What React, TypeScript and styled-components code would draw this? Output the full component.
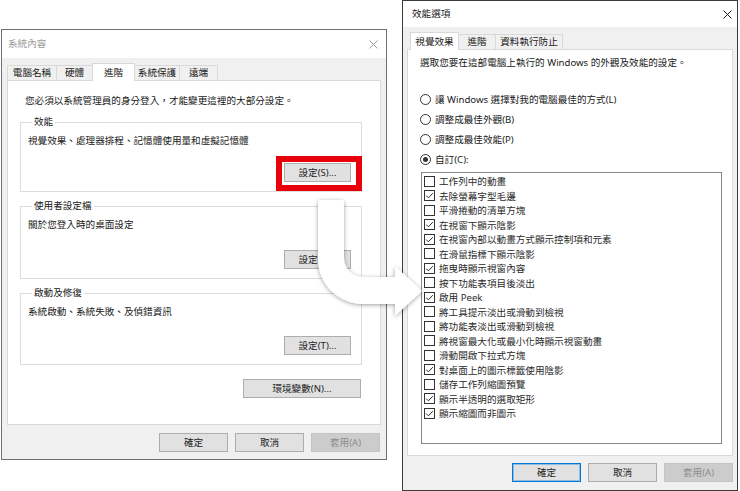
import styled, { createGlobalStyle } from 'styled-components';

type Item = { label: string; checked: boolean };

const modes: Item[] = [
  { label: '讓 Windows 選擇對我的電腦最佳的方式(L)', checked: false },
  { label: '調整成最佳外觀(B)', checked: false },
  { label: '調整成最佳效能(P)', checked: false },
  { label: '自訂(C):', checked: true },
];

const effects: Item[] = [
  { label: '工作列中的動畫', checked: false },
  { label: '去除螢幕字型毛邊', checked: true },
  { label: '平滑捲動的清單方塊', checked: false },
  { label: '在視窗下顯示陰影', checked: true },
  { label: '在視窗內部以動畫方式顯示控制項和元素', checked: true },
  { label: '在滑鼠指標下顯示陰影', checked: false },
  { label: '拖曳時顯示視窗內容', checked: true },
  { label: '按下功能表項目後淡出', checked: false },
  { label: '啟用 Peek', checked: true },
  { label: '將工具提示淡出或滑動到檢視', checked: false },
  { label: '將功能表淡出或滑動到檢視', checked: false },
  { label: '將視窗最大化或最小化時顯示視窗動畫', checked: false },
  { label: '滑動開啟下拉式方塊', checked: false },
  { label: '對桌面上的圖示標籤使用陰影', checked: true },
  { label: '儲存工作列縮圖預覽', checked: false },
  { label: '顯示半透明的選取矩形', checked: true },
  { label: '顯示縮圖而非圖示', checked: true },
];

function CloseIcon() {
  return (
    <svg width="9" height="9" viewBox="0 0 9 9">
      <path d="M0.5 0.5 L8.5 8.5 M8.5 0.5 L0.5 8.5" stroke="currentColor" strokeWidth="1" />
    </svg>
  );
}

export default function App() {
  return (
    <>
      <GlobalStyle />
      <Stage>
        <Window $w={386} $h={431} $mt={29} $ml={1} $border="#707070">
          <TitleBar $h={28} $active={false} $pl={6} $pr={8}>
            <span>系統內容</span>
            <CloseIcon />
          </TitleBar>
          <Body $pad="5px 5px 0 5px">
            <TabStrip $ml={0}>
              <Tab $w={50}>電腦名稱</Tab>
              <Tab $w={37}>硬體</Tab>
              <Tab $w={43} $active>進階</Tab>
              <Tab $w={46}>系統保護</Tab>
              <Tab $w={39}>遠端</Tab>
            </TabStrip>
            <Panel $h={345} $pad="13px 18px 0 12px">
              <Note>您必須以系統管理員的身分登入，才能變更這裡的大部分設定。</Note>
              <Group $mt={8}>
                <GroupLabel>效能</GroupLabel>
                <Desc>視覺效果、處理器排程、記憶體使用量和虛擬記憶體</Desc>
                <ButtonLine $mt={15}>
                  <Highlight>
                    <Button $w={67}>設定(S)...</Button>
                  </Highlight>
                </ButtonLine>
              </Group>
              <Group $mt={8}>
                <GroupLabel>使用者設定檔</GroupLabel>
                <Desc>關於您登入時的桌面設定</Desc>
                <ButtonLine $mt={18}>
                  <Button $w={67}>設定(E)...</Button>
                </ButtonLine>
              </Group>
              <Group $mt={8}>
                <GroupLabel>啟動及修復</GroupLabel>
                <Desc>系統啟動、系統失敗、及偵錯資訊</Desc>
                <ButtonLine $mt={17}>
                  <Button $w={67}>設定(T)...</Button>
                </ButtonLine>
              </Group>
              <ButtonLine $mt={14} $pr={1}>
                <Button $w={118}>環境變數(N)...</Button>
              </ButtonLine>
            </Panel>
            <DialogButtons $mt={8} $pr={1}>
              <Button $w={69}>確定</Button>
              <Button $w={69}>取消</Button>
              <Button $w={69} disabled>
                套用(A)
              </Button>
            </DialogButtons>
          </Body>
        </Window>

        <Window $w={336} $h={491} $mt={0} $ml={15} $border="#3c3c3c">
          <TitleBar $h={26} $active $pl={9} $pr={5}>
            <span>效能選項</span>
            <CloseIcon />
          </TitleBar>
          <Body $pad="5px 4px 0 4px">
            <TabStrip $ml={3}>
              <Tab $w={49} $active>視覺效果</Tab>
              <Tab $w={38}>進階</Tab>
              <Tab $w={68}>資料執行防止</Tab>
            </TabStrip>
            <Panel $h={407} $pad="6px 10px 0 12px">
              <Note $ml={0}>選取您要在這部電腦上執行的 Windows 的外觀及效能的設定。</Note>
              <RadioList>
                {modes.map((m) => (
                  <RadioRow key={m.label}>
                    <Radio $on={m.checked} />
                    {m.label}
                  </RadioRow>
                ))}
              </RadioList>
              <ListBox>
                {effects.map((e) => (
                  <CheckRow key={e.label}>
                    <CheckBox>
                      {e.checked && (
                        <svg width="9" height="9" viewBox="0 0 9 9">
                          <polyline
                            points="1.2,4.6 3.4,6.8 7.8,2.2"
                            fill="none"
                            stroke="#2b2b2b"
                            strokeWidth="1"
                          />
                        </svg>
                      )}
                    </CheckBox>
                    {e.label}
                  </CheckRow>
                ))}
              </ListBox>
            </Panel>
            <DialogButtons $mt={7} $pr={0}>
              <Button $w={69} $default>確定</Button>
              <Button $w={69}>取消</Button>
              <Button $w={69} disabled>
                套用(A)
              </Button>
            </DialogButtons>
          </Body>
        </Window>

        <ArrowLayer viewBox="0 0 740 491" aria-hidden="true">
          <defs>
            <filter id="arrow-shadow" x="-30%" y="-30%" width="160%" height="160%">
              <feDropShadow dx="0" dy="1" stdDeviation="2" floodColor="#000" floodOpacity="0.38" />
            </filter>
          </defs>
          <path
            d="M321 200 H341 Q344 200 344 203 V258 A19 19 0 0 0 363 277 H395 V266 L422 291 L395 316 V304 H363 A45 45 0 0 1 318 259 V203 Q318 200 321 200 Z"
            fill="#fff"
            filter="url(#arrow-shadow)"
          />
        </ArrowLayer>
      </Stage>
    </>
  );
}

const GlobalStyle = createGlobalStyle`
  html, body {
    margin: 0;
    padding: 0;
    background: #fff;
  }
  body {
    font-family: "Noto Sans", "Noto Sans CJK TC", sans-serif;
    font-size: 9.6px;
    color: #202020;
  }
  *, *::before, *::after {
    box-sizing: border-box;
  }
`;

const Stage = styled.div`
  position: relative;
  width: 740px;
  height: 491px;
  display: flex;
  align-items: flex-start;
  overflow: hidden;
`;

const Window = styled.section<{ $w: number; $h: number; $mt: number; $ml: number; $border: string }>`
  flex: none;
  width: ${(p) => p.$w}px;
  height: ${(p) => p.$h}px;
  margin: ${(p) => p.$mt}px 0 0 ${(p) => p.$ml}px;
  border: 1px solid ${(p) => p.$border};
  background: #f0f0f0;
  display: flex;
  flex-direction: column;
`;

const TitleBar = styled.header<{ $h: number; $active: boolean; $pl: number; $pr: number }>`
  flex: none;
  height: ${(p) => p.$h}px;
  background: #fff;
  display: flex;
  align-items: center;
  justify-content: space-between;
  padding: 0 ${(p) => p.$pr}px 0 ${(p) => p.$pl}px;
  color: ${(p) => (p.$active ? '#1a1a1a' : '#9a9a9a')};
  line-height: 14px;
`;

const Body = styled.div<{ $pad: string }>`
  flex: 1;
  display: flex;
  flex-direction: column;
  padding: ${(p) => p.$pad};
`;

const TabStrip = styled.div<{ $ml: number }>`
  position: relative;
  z-index: 1;
  flex: none;
  height: 17px;
  display: flex;
  align-items: flex-end;
  margin-left: ${(p) => p.$ml}px;
`;

const Tab = styled.div<{ $w: number; $active?: boolean }>`
  position: relative;
  z-index: ${(p) => (p.$active ? 2 : 1)};
  width: ${(p) => p.$w}px;
  height: ${(p) => (p.$active ? 18 : 15)}px;
  margin-bottom: ${(p) => (p.$active ? -1 : 0)}px;
  margin-right: -1px;
  display: flex;
  align-items: center;
  justify-content: center;
  border: 1px solid #d9d9d9;
  border-bottom: none;
  background: ${(p) => (p.$active ? '#fff' : '#f0f0f0')};
  line-height: 12px;
  white-space: nowrap;
`;

const Panel = styled.div<{ $h: number; $pad: string }>`
  flex: none;
  height: ${(p) => p.$h}px;
  background: #fff;
  border: 1px solid #d9d9d9;
  padding: ${(p) => p.$pad};
  display: flex;
  flex-direction: column;
`;

const Note = styled.div<{ $ml?: number }>`
  line-height: 14px;
  margin-left: ${(p) => p.$ml ?? 5}px;
  white-space: nowrap;
`;

const Group = styled.fieldset<{ $mt: number }>`
  margin: ${(p) => p.$mt}px 0 0;
  padding: 6px 10px 9px 7px;
  border: 1px solid #dcdcdc;
  min-width: 0;
`;

const GroupLabel = styled.legend`
  padding: 0 2px;
  margin-left: 4px;
  line-height: 12px;
`;

const Desc = styled.div`
  line-height: 14px;
  white-space: nowrap;
`;

const ButtonLine = styled.div<{ $mt: number; $pr?: number }>`
  display: flex;
  justify-content: flex-end;
  margin-top: ${(p) => p.$mt}px;
  padding-right: ${(p) => p.$pr ?? 0}px;
`;

const Highlight = styled.span`
  position: relative;
  display: inline-flex;
  &::after {
    content: '';
    position: absolute;
    inset: -7px -11px -9px -8px;
    border: 6px solid #e8000b;
    pointer-events: none;
  }
`;

const Button = styled.button<{ $w: number; $default?: boolean }>`
  width: ${(p) => p.$w}px;
  height: 19px;
  padding: 0;
  font: inherit;
  line-height: 12px;
  color: #1e1e1e;
  background: #e1e1e1;
  border: 1px solid ${(p) => (p.$default ? '#0078d7' : '#adadad')};
  box-shadow: ${(p) => (p.$default ? 'inset 0 0 0 1px rgba(0, 120, 215, 0.35)' : 'none')};
  white-space: nowrap;
  &:disabled {
    background: #cccccc;
    border-color: #c4c4c4;
    color: #8c8c8c;
  }
`;

const DialogButtons = styled.div<{ $mt: number; $pr: number }>`
  flex: none;
  display: flex;
  justify-content: flex-end;
  gap: 7px;
  margin-top: ${(p) => p.$mt}px;
  padding-right: ${(p) => p.$pr}px;
`;

const RadioList = styled.div`
  display: flex;
  flex-direction: column;
  margin-top: 19px;
`;

const RadioRow = styled.div`
  height: 20px;
  display: flex;
  align-items: center;
  gap: 4px;
  white-space: nowrap;
`;

const Radio = styled.span<{ $on: boolean }>`
  flex: none;
  width: 11px;
  height: 11px;
  border: 1px solid #333;
  border-radius: 50%;
  display: flex;
  align-items: center;
  justify-content: center;
  background: #fff;
  &::after {
    content: '';
    width: 5px;
    height: 5px;
    border-radius: 50%;
    background: ${(p) => (p.$on ? '#333' : 'transparent')};
  }
`;

const ListBox = styled.div`
  margin: 3px 0 0 1px;
  width: 301px;
  height: 272px;
  border: 1px solid #828790;
  background: #fff;
  padding: 1px 0 0 2px;
  display: flex;
  flex-direction: column;
`;

const CheckRow = styled.div`
  height: 14.5px;
  display: flex;
  align-items: center;
  gap: 4px;
  color: #2a2a2a;
  white-space: nowrap;
`;

const CheckBox = styled.span`
  flex: none;
  width: 11px;
  height: 11px;
  border: 1px solid #333;
  background: #fff;
  display: flex;
  align-items: center;
  justify-content: center;
`;

const ArrowLayer = styled.svg`
  position: absolute;
  left: 0;
  top: 0;
  width: 740px;
  height: 491px;
  pointer-events: none;
`;
